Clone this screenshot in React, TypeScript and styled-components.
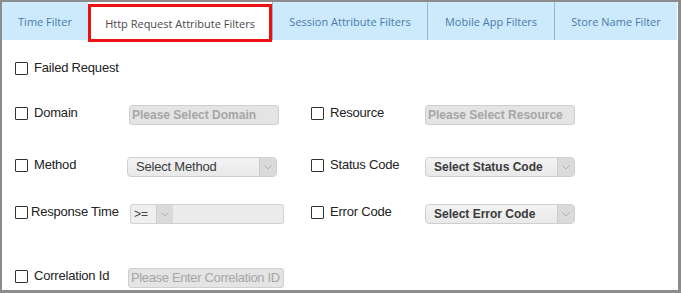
import React from "react";
import styled, { createGlobalStyle } from "styled-components";

const GlobalStyle = createGlobalStyle`
  html, body {
    margin: 0;
    padding: 0;
    background: #ffffff;
  }
  * {
    box-sizing: border-box;
  }
`;

const Frame = styled.div`
  width: 681px;
  height: 293px;
  border-style: solid;
  border-color: #8c8c8c;
  border-width: 2px 3px 3px 2px;
  background: #ffffff;
  display: flex;
  flex-direction: column;
  font-family: "Liberation Sans", Arial, sans-serif;
`;

const TabBar = styled.div`
  display: flex;
  height: 38px;
  padding-right: 1px;
`;

const Tab = styled.div<{ $width: number; $active?: boolean }>`
  width: ${({ $width }) => $width}px;
  height: 38px;
  display: flex;
  align-items: center;
  justify-content: center;
  font-family: "Open Sans", sans-serif;
  font-size: 11px;
  padding-top: 1px;
  color: ${({ $active }) => ($active ? "#4a4a4a" : "#4b7bab")};
  background: ${({ $active }) => ($active ? "#ffffff" : "#cde9fc")};
  border-left: ${({ $active }) => ($active ? "none" : "1px solid #93b6d8")};
  outline: ${({ $active }) => ($active ? "3px solid #ee1111" : "none")};
  outline-offset: -3px;
  margin-top: ${({ $active }) => ($active ? "2px" : "0")};

  &:first-child {
    border-left: none;
  }
`;

const Body = styled.div`
  flex: 1;
  padding: 20px 0 0 11px;
  display: flex;
  flex-direction: column;
`;

const Row = styled.div<{ $height: number }>`
  display: grid;
  grid-template-columns: 296px 300px;
  height: ${({ $height }) => $height}px;
  align-items: start;
`;

const Field = styled.div<{ $labelWidth: number }>`
  display: grid;
  grid-template-columns: ${({ $labelWidth }) => $labelWidth}px auto;
  align-items: start;
`;

const CheckLabel = styled.label<{ $tight?: boolean }>`
  display: flex;
  align-items: flex-start;
  gap: ${({ $tight }) => ($tight ? "3px" : "6px")};
  font-size: 13px;
  letter-spacing: -0.2px;
  color: #222;
  line-height: 16px;
  white-space: nowrap;
`;

const Box = styled.input.attrs({ type: "checkbox" })`
  appearance: none;
  margin: 2px 0 0 2px;
  width: 13px;
  height: 13px;
  border: 1px solid #333;
  border-radius: 1px;
  background: #fff;
  flex: none;
`;

const TextBox = styled.div<{ $width: number; $bold?: boolean }>`
  width: ${({ $width }) => $width}px;
  height: 20px;
  background: #e4e4e4;
  border: 1px solid #cfcfcf;
  border-radius: 3px;
  color: #a6a6a6;
  font-size: ${({ $bold }) => ($bold ? "12px" : "13px")};
  font-weight: ${({ $bold }) => ($bold ? 700 : 400)};
  letter-spacing: ${({ $bold }) => ($bold ? "0" : "-0.35px")};
  line-height: 18px;
  padding-left: 2px;
  white-space: nowrap;
  overflow: hidden;
`;

const Select = styled.div<{ $width: number; $bold?: boolean }>`
  width: ${({ $width }) => $width}px;
  height: 20px;
  display: flex;
  background: linear-gradient(#f3f3f3, #e9e9e9);
  border: 1px solid #cfcfcf;
  border-radius: 4px;
  overflow: hidden;
  color: #3a3a3a;
  font-size: ${({ $bold }) => ($bold ? "12px" : "13px")};
  font-weight: ${({ $bold }) => ($bold ? 700 : 400)};
  letter-spacing: ${({ $bold }) => ($bold ? "0" : "-0.2px")};
  line-height: 18px;
`;

const SelectText = styled.span`
  flex: 1;
  padding-left: 8px;
  white-space: nowrap;
`;

const Arrow = styled.span`
  width: 17px;
  flex: none;
  display: flex;
  align-items: center;
  justify-content: center;
  background: #dadada;
  border-left: 1px solid #cdcdcd;
`;

const Combo = styled.div`
  display: flex;
  height: 20px;
`;

const OpSelect = styled.div`
  width: 43px;
  display: flex;
  background: #efefef;
  border: 1px solid #d2d2d2;
  border-right: none;
  border-radius: 3px 0 0 3px;
  font-size: 12px;
  color: #444;
  line-height: 18px;
`;

const OpText = styled.span`
  flex: 1;
  padding-left: 3px;
`;

const NumberBox = styled.div`
  width: 111px;
  background: #ececec;
  border: 1px solid #d2d2d2;
  border-left: none;
  border-radius: 0 3px 3px 0;
`;

const Chevron = () => (
  <svg width="8" height="5" viewBox="0 0 8 5">
    <path d="M0.5 0.5 L4 4 L7.5 0.5" fill="none" stroke="#b0b0b0" strokeWidth="1" />
  </svg>
);

const tabs = [
  { title: "Time Filter", width: 86 },
  { title: "Http Request Attribute Filters", width: 184, active: true },
  { title: "Session Attribute Filters", width: 155 },
  { title: "Mobile App Filters", width: 127 },
  { title: "Store Name Filter", width: 123 },
];

const App = () => {
  return (
    <>
      <GlobalStyle />
      <Frame>
        <TabBar>
          {tabs.map((t) => (
            <Tab key={t.title} $width={t.width} $active={t.active}>
              {t.title}
            </Tab>
          ))}
        </TabBar>
        <Body>
          <Row $height={45}>
            <Field $labelWidth={116}>
              <CheckLabel>
                <Box />
                Failed Request
              </CheckLabel>
            </Field>
          </Row>
          <Row $height={52}>
            <Field $labelWidth={116}>
              <CheckLabel>
                <Box />
                Domain
              </CheckLabel>
              <TextBox $width={150} $bold>Please Select Domain</TextBox>
            </Field>
            <Field $labelWidth={116}>
              <CheckLabel>
                <Box />
                Resource
              </CheckLabel>
              <TextBox $width={150} $bold>Please Select Resource</TextBox>
            </Field>
          </Row>
          <Row $height={47}>
            <Field $labelWidth={114}>
              <CheckLabel>
                <Box />
                Method
              </CheckLabel>
              <Select $width={150}>
                <SelectText>Select Method</SelectText>
                <Arrow>
                  <Chevron />
                </Arrow>
              </Select>
            </Field>
            <Field $labelWidth={116}>
              <CheckLabel>
                <Box />
                Status Code
              </CheckLabel>
              <Select $width={150} $bold>
                <SelectText>Select Status Code</SelectText>
                <Arrow>
                  <Chevron />
                </Arrow>
              </Select>
            </Field>
          </Row>
          <Row $height={64}>
            <Field $labelWidth={117}>
              <CheckLabel $tight>
                <Box />
                Response Time
              </CheckLabel>
              <Combo>
                <OpSelect>
                  <OpText>&gt;=</OpText>
                  <Arrow>
                    <Chevron />
                  </Arrow>
                </OpSelect>
                <NumberBox />
              </Combo>
            </Field>
            <Field $labelWidth={116}>
              <CheckLabel>
                <Box />
                Error Code
              </CheckLabel>
              <Select $width={150} $bold>
                <SelectText>Select Error Code</SelectText>
                <Arrow>
                  <Chevron />
                </Arrow>
              </Select>
            </Field>
          </Row>
          <Row $height={22}>
            <Field $labelWidth={115}>
              <CheckLabel>
                <Box />
                Correlation Id
              </CheckLabel>
              <TextBox $width={156}>Please Enter Correlation ID</TextBox>
            </Field>
          </Row>
        </Body>
      </Frame>
    </>
  );
};

export default App;
